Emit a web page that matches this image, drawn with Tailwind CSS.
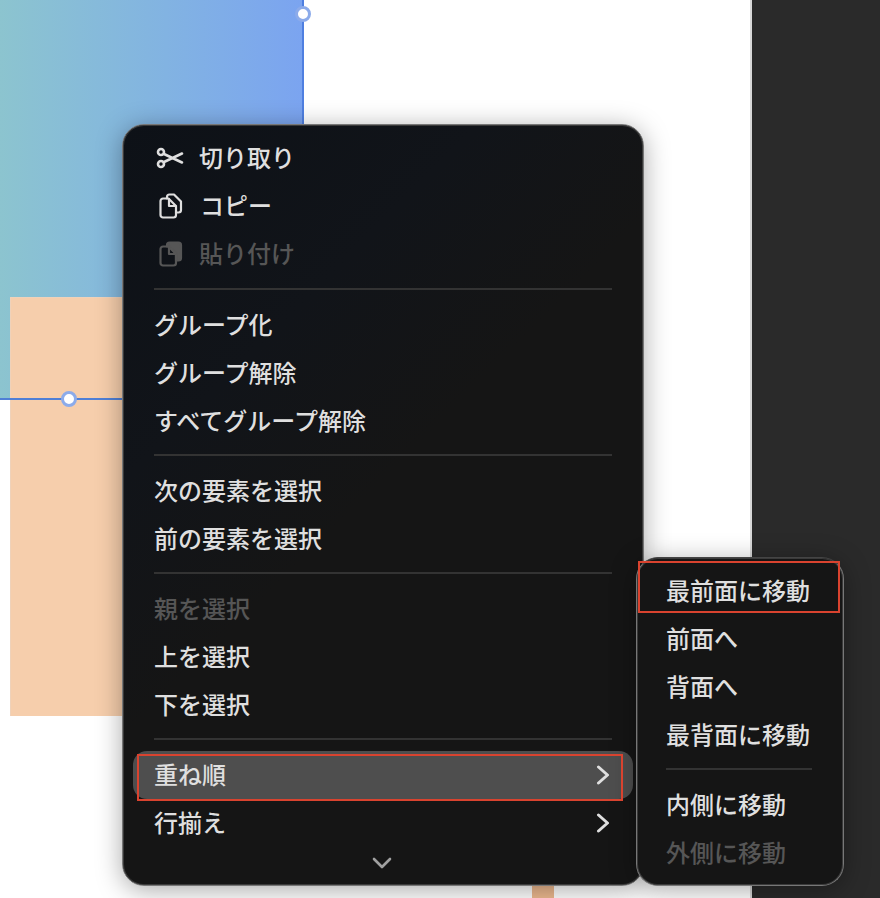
<!DOCTYPE html>
<html lang="ja">
<head>
<meta charset="utf-8">
<script src="https://cdn.jsdelivr.net/npm/@tailwindcss/browser@4"></script>
</head>
<body class="bg-white">
<div class="relative w-[880px] h-[898px] overflow-hidden bg-white font-['Noto_Sans_CJK_JP','Noto_Sans',sans-serif]">
  <!-- canvas -->
  <div class="absolute left-[752px] top-0 w-[128px] h-[898px] bg-[#2a2a2a]"></div>
  <div class="absolute left-[750px] top-0 w-[2px] h-[898px] bg-[#d8d8d8]"></div>
  <div class="absolute left-0 top-0 w-[304px] h-[398px] bg-gradient-to-r from-[#8cc4cf] to-[#7ba4f0] border-r-2 border-[#4f7fe0]"></div>
  <div class="absolute left-[10px] top-[297px] w-[200px] h-[419px] bg-[#f6ceac] border-l border-t border-[#efd2ba]"></div>
  <div class="absolute left-0 top-[398px] w-[200px] h-[1.5px] bg-[#4f7fd6]"></div>
  <div class="absolute left-[532px] top-[860px] w-[22px] h-[38px] bg-[#edb98f]"></div>
  <div class="absolute left-[61px] top-[391px] w-[16px] h-[16px] rounded-full bg-white border-[3px] border-[#8cabea]"></div>
  <div class="absolute left-[295px] top-[6px] w-[16px] h-[16px] rounded-full bg-white border-[3px] border-[#8cabea]"></div>

  <!-- main menu -->
  <div class="absolute left-[122px] top-[124px] w-[522px] h-[762px] rounded-[22px] border border-[#777777] bg-[linear-gradient(135deg,#0d1117_0%,#111419_28%,#151515_48%,#151515_100%)] shadow-[inset_0_0_0_1px_#3a3a3a,0_4px_26px_rgba(0,0,0,0.34)] text-[24px] font-medium leading-[46px] text-[#dfdfdf]">
    <div class="flex flex-col pt-[9px] px-[31px]">
      <div class="h-[48px] flex items-center pb-[2px]">
        <svg class="w-[28px] h-[22px] ml-[2px] mr-[15px] mt-[1px]" viewBox="0 0 28 22" fill="none" stroke="#dfdfdf" stroke-width="2.6" stroke-linecap="round" stroke-linejoin="round">
          <circle cx="5" cy="5" r="3"/><circle cx="5" cy="17" r="3"/>
          <path d="M8 7 L26 15.5 M8 15 L26 6.5"/>
        </svg>
        <span>切り取り</span>
      </div>
      <div class="h-[48px] flex items-center pb-[2px]">
        <svg class="w-[24px] h-[26px] ml-[5px] mr-[17px] mt-[2px]" viewBox="0 0 24 26" fill="none" stroke="#dfdfdf" stroke-width="2.2" stroke-linejoin="round" stroke-linecap="round">
          <path d="M8 5.5 V4 a2.5 2.5 0 0 1 2.5-2.5 H15 L22 8.5 V17 a2.5 2.5 0 0 1-2.5 2.5 H17"/>
          <path d="M4 5.5 H9.5 L17 13 V22 a2.5 2.5 0 0 1-2.5 2.5 H4 a2.5 2.5 0 0 1-2.5-2.5 V8 a2.5 2.5 0 0 1 2.5-2.5 Z"/>
          <path d="M10 6 V13 H16.5"/>
        </svg>
        <span>コピー</span>
      </div>
      <div class="h-[48px] flex items-center pb-[2px] text-[#565656]">
        <svg class="w-[24px] h-[26px] ml-[5px] mr-[16px] mt-[2px]" viewBox="0 0 24 26" fill="none" stroke="#565656" stroke-width="2.2" stroke-linejoin="round" stroke-linecap="round">
          <path fill="#565656" d="M8 5.5 V4 a2.5 2.5 0 0 1 2.5-2.5 H19.5 a2.5 2.5 0 0 1 2.5 2.5 V17 a2.5 2.5 0 0 1-2.5 2.5 H17 V12 L10.5 5.5 Z"/>
          <path d="M4 5.5 H9.5 L17 13 V22 a2.5 2.5 0 0 1-2.5 2.5 H4 a2.5 2.5 0 0 1-2.5-2.5 V8 a2.5 2.5 0 0 1 2.5-2.5 Z"/>
          <path d="M10 6 V13 H16.5"/>
        </svg>
        <span>貼り付け</span>
      </div>
      <div class="h-[2px] bg-[#333333] mt-[10px] mb-[11px]"></div>
      <div class="h-[48px]">グループ化</div>
      <div class="h-[48px]">グループ解除</div>
      <div class="h-[48px]">すべてグループ解除</div>
      <div class="h-[2px] bg-[#333333] mt-[9px] mb-[11px]"></div>
      <div class="h-[48px]">次の要素を選択</div>
      <div class="h-[48px]">前の要素を選択</div>
      <div class="h-[2px] bg-[#333333] mt-[9px] mb-[11px]"></div>
      <div class="h-[48px] text-[#565656]">親を選択</div>
      <div class="h-[48px]">上を選択</div>
      <div class="h-[48px]">下を選択</div>
      <div class="h-[2px] bg-[#333333] mt-[9px] mb-[11px]"></div>
      <div class="relative h-[48px] flex items-center justify-between">
        <div class="absolute -left-[21px] -right-[21px] inset-y-0 rounded-[14px] bg-[#4e4e4e]"></div>
        <span class="relative -mt-[2px]">重ね順</span>
        <svg class="relative w-[14px] h-[20px] mr-[2px]" viewBox="0 0 14 20" fill="none" stroke="#dfdfdf" stroke-width="3" stroke-linecap="round" stroke-linejoin="round"><path d="M2.5 2 L11.5 10 L2.5 18"/></svg>
      </div>
      <div class="h-[48px] flex items-center justify-between">
        <span class="-mt-[2px]">行揃え</span>
        <svg class="w-[14px] h-[20px] mr-[2px]" viewBox="0 0 14 20" fill="none" stroke="#dfdfdf" stroke-width="3" stroke-linecap="round" stroke-linejoin="round"><path d="M2.5 2 L11.5 10 L2.5 18"/></svg>
      </div>
      <div class="flex justify-center pt-[10px] pr-[2px]">
        <svg class="w-[20px] h-[12px]" viewBox="0 0 20 12" fill="none" stroke="#a0a0a0" stroke-width="2.6" stroke-linecap="round" stroke-linejoin="round"><path d="M2 2 L10 10 L18 2"/></svg>
      </div>
    </div>
  </div>

  <!-- submenu -->
  <div class="absolute left-[636px] top-[557px] w-[208px] h-[329px] rounded-[22px] border border-[#777777] border-t-[#444444] bg-[#151515] shadow-[inset_0_0_0_1px_#3a3a3a,0_4px_26px_rgba(0,0,0,0.34)] text-[24px] font-medium leading-[46px] text-[#dfdfdf]">
    <div class="flex flex-col pt-[9px] pl-[29px] pr-[31px]">
      <div class="h-[48px]">最前面に移動</div>
      <div class="h-[48px]">前面へ</div>
      <div class="h-[48px]">背面へ</div>
      <div class="h-[48px]">最背面に移動</div>
      <div class="h-[2px] bg-[#333333] mt-[9px] mb-[11px]"></div>
      <div class="h-[48px]">内側に移動</div>
      <div class="h-[48px] text-[#565656]">外側に移動</div>
    </div>
  </div>

  <!-- annotation rectangles -->
  <div class="absolute left-[137px] top-[754px] w-[486px] h-[47px] border-2 border-[#d9432f]"></div>
  <div class="absolute left-[638px] top-[561px] w-[202px] h-[52px] border-2 border-[#d9432f]"></div>
</div>
</body>
</html>
